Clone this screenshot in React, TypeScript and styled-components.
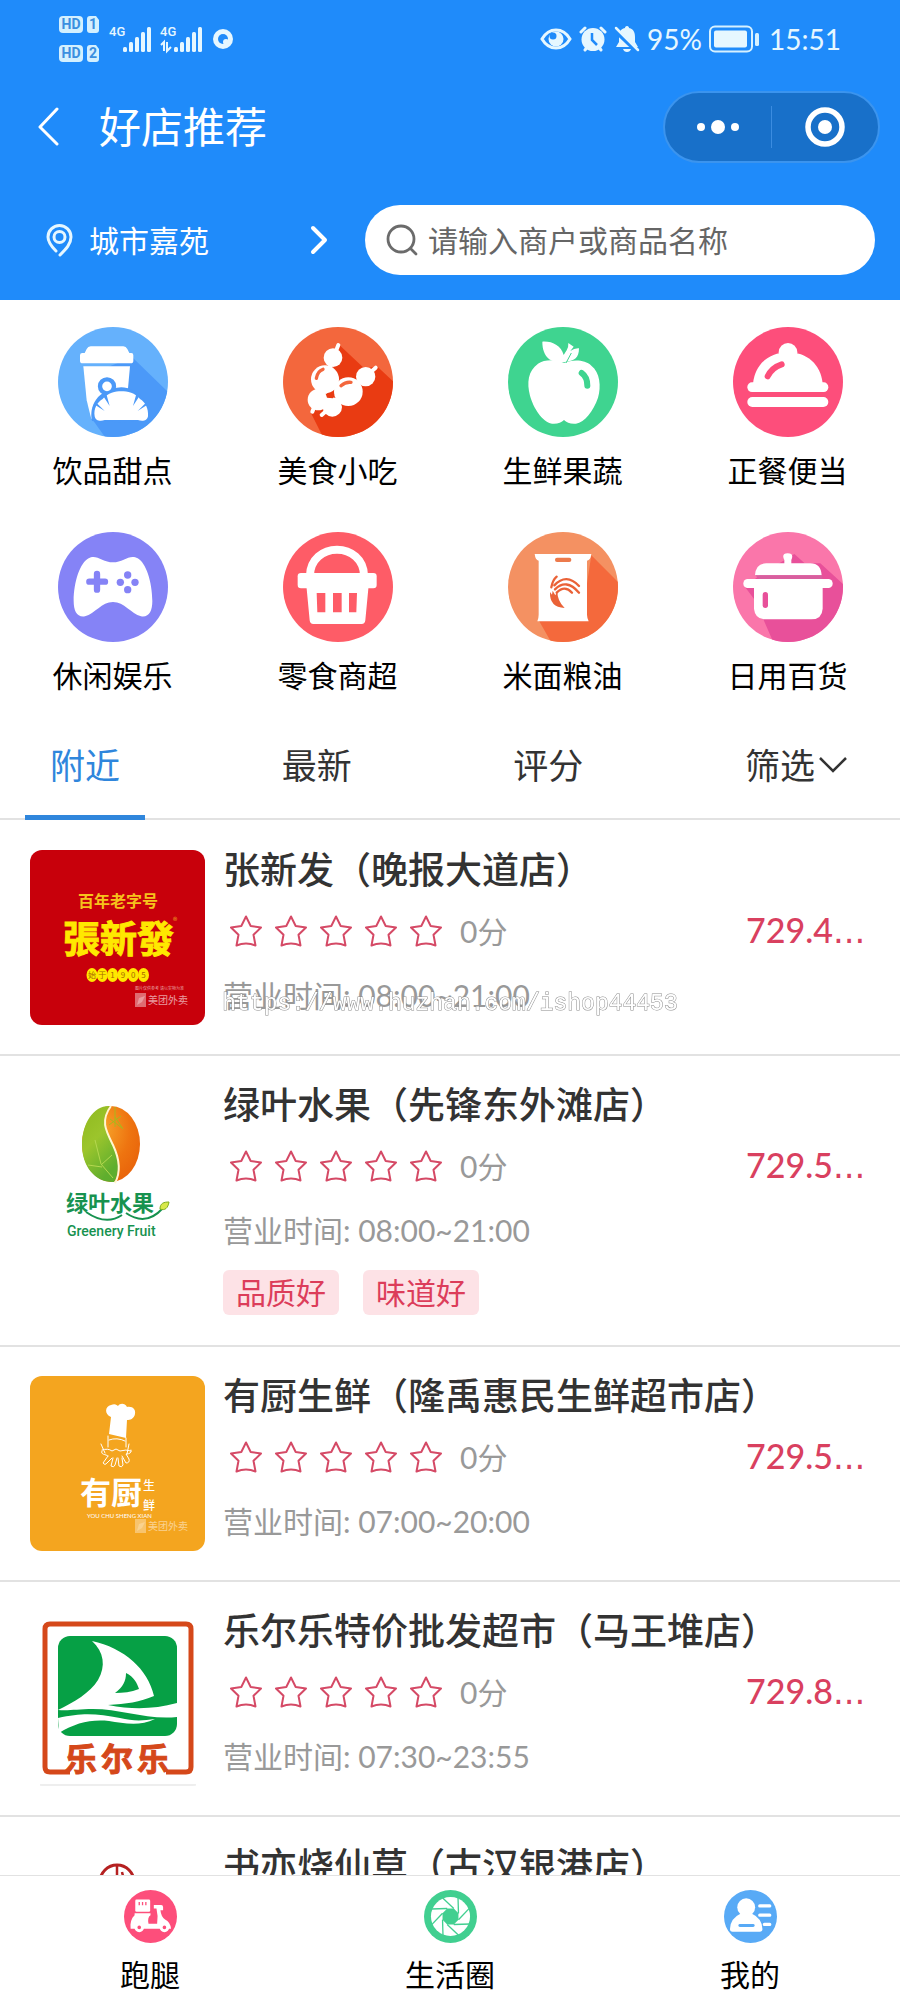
import { ReactNode, useState } from "react";
import styled, { createGlobalStyle } from "styled-components";

const cjk = `Lato, "Noto Sans CJK SC", sans-serif`;

const GlobalStyle = createGlobalStyle`
  * {
    box-sizing: border-box;
  }

  body {
    margin: 0;
    background: #fff;
    font-family: ${cjk};
    color: #333;
  }

  button, input {
    margin: 0;
    padding: 0;
    border: 0;
    background: none;
    color: inherit;
    font-family: inherit;
  }

  h1, h2, p {
    margin: 0;
    font-weight: 400;
  }

  a {
    color: inherit;
    text-decoration: none;
  }

  svg {
    display: block;
    flex-shrink: 0;
  }
`;

const Screen = styled.div`
  display: flex;
  flex-direction: column;
  height: 100vh;
`;

const Header = styled.header`
  flex-shrink: 0;
  padding-bottom: 25px;
  background: #1f8bfa;
  color: #fff;
`;

const StatusBar = styled.div`
  display: flex;
  justify-content: space-between;
  align-items: center;
  height: 78px;
  padding: 0 59px;
  color: #e6f7ff;
  font-size: 28px;
  line-height: 36px;
`;

const StatusGroup = styled.div`
  display: flex;
  align-items: center;
  gap: 7px;
`;

const Clock = styled.span`
  margin-left: 3px;
`;

const TitleBar = styled.div`
  display: flex;
  align-items: center;
  margin-top: 13px;
  padding: 0 20px 0 36px;
`;

const Back = styled.button`
  width: 63px;
`;

const Title = styled.h1`
  flex: 1;
  font-size: 42px;
  line-height: 52px;
`;

const Capsule = styled.div`
  display: flex;
  align-items: center;
  width: 217px;
  height: 72px;
  border: 2px solid #3b94ee;
  border-radius: 36px;
  background: #1870c9;
`;

const CapsuleButton = styled.button`
  display: flex;
  flex: 1;
  align-items: center;
  justify-content: center;
  height: 100%;
`;

const CapsuleDivider = styled.span`
  width: 1px;
  height: 42px;
  background: #3b8ce0;
`;

const SearchRow = styled.div`
  display: flex;
  margin-top: 42px;
  padding: 0 25px 0 45px;
`;

const Place = styled.button`
  display: flex;
  align-items: center;
  width: 320px;
  padding-right: 36px;
  font-size: 30px;
  line-height: 40px;
`;

const PlaceName = styled.span`
  flex: 1;
  padding-left: 15px;
  text-align: left;
`;

const SearchBox = styled.label`
  display: flex;
  flex: 1;
  align-items: center;
  gap: 10px;
  height: 70px;
  padding: 0 21px;
  border-radius: 35px;
  background: #fff;
`;

const SearchInput = styled.input`
  flex: 1;
  min-width: 0;
  height: 44px;
  font-size: 30px;
  color: #333;
  outline: none;

  &::placeholder {
    color: #666;
    opacity: 1;
  }
`;

const Content = styled.main`
  flex: 1;
  min-height: 0;
  overflow-y: auto;
  scrollbar-width: none;
`;

const Categories = styled.nav`
  display: grid;
  grid-template-columns: repeat(4, 1fr);
  row-gap: 42px;
  padding: 27px 0 12px;
`;

const Category = styled.a`
  display: flex;
  flex-direction: column;
  align-items: center;
  gap: 13px;
  color: #000;
  font-size: 30px;
  line-height: 40px;
`;

const Tabs = styled.div`
  display: flex;
  justify-content: space-between;
  margin-bottom: 1px;
  padding: 0 28px 0 25px;
  border-bottom: 2px solid #e2e2e2;
`;

const Tab = styled.button<{ $active: boolean }>`
  display: flex;
  align-items: center;
  gap: 4px;
  height: 113px;
  margin-bottom: -2px;
  padding: 8px 25px 0;
  border-bottom: 5px solid ${(p) => (p.$active ? "#2f86dc" : "transparent")};
  color: ${(p) => (p.$active ? "#2f86dc" : "#333")};
  font-size: 35px;
  line-height: 44px;
`;

const ShopRow = styled.article`
  display: flex;
  gap: 18px;
  padding: 29px 30px;
  border-bottom: 2px solid #e2e2e2;
`;

const Thumb = styled.div`
  width: 175px;
  height: 175px;
  flex-shrink: 0;
  border-radius: 12px;
  overflow: hidden;
`;

const ShopInfo = styled.div`
  flex: 1;
  min-width: 0;
`;

const ShopName = styled.h2`
  font-size: 37px;
  font-weight: 500;
  line-height: 40px;
  white-space: nowrap;
`;

const RatingLine = styled.div`
  display: flex;
  align-items: center;
  margin-top: 18px;
  padding-left: 7px;
  line-height: 44px;
`;

const Stars = styled.div`
  display: flex;
  gap: 13px;
`;

const Score = styled.span`
  flex: 1;
  padding-left: 18px;
  color: #999;
  font-size: 30px;
`;

const Distance = styled.span`
  width: 124px;
  color: #d9405f;
  font-size: 34px;
  font-weight: 500;
  white-space: nowrap;
`;

const Dots = styled.span`
  font-family: "DejaVu Sans", sans-serif;
`;

const Hours = styled.p`
  margin-top: 20px;
  color: #999;
  font-size: 30px;
  line-height: 44px;
`;

const Tags = styled.div`
  display: flex;
  gap: 24px;
  margin-top: 18px;
  margin-bottom: 1px;
`;

const Tag = styled.span`
  padding: 0 13px;
  border-radius: 6px;
  background: #fde2e6;
  color: #dc3d5a;
  font-size: 30px;
  line-height: 45px;
`;

const BottomNav = styled.nav`
  display: flex;
  flex-shrink: 0;
  height: 125px;
  border-top: 1px solid #e2e2e2;
  background: #fff;
`;

const NavItem = styled.a`
  display: flex;
  flex: 1;
  flex-direction: column;
  align-items: center;
  gap: 11px;
  padding-top: 14px;
  color: #000;
  font-size: 30px;
  line-height: 40px;
`;

const Watermark = styled.div`
  position: fixed;
  inset: 0;
  display: grid;
  place-items: center;
  padding-top: 8px;
  pointer-events: none;
  color: #fff;
  font-family: "Liberation Mono", monospace;
  font-size: 23px;
  paint-order: stroke fill;
  -webkit-text-stroke: 1px #8c8c8c;
`;

/* ---------- status bar ---------- */

const SignalBars = ({ x }: { x: number }) => (
  <g fill="#e6f7ff">
    {[5, 10, 15, 20, 25].map((h, i) => (
      <rect key={h} x={x + i * 6} y={36 - h} width="4" height={h} rx="1.5" />
    ))}
  </g>
);

const HdBadge = ({ y, sim }: { y: number; sim: string }) => (
  <g fontFamily="Roboto, sans-serif" fontWeight="700" fontSize="14" textAnchor="middle">
    <rect x="0" y={y} width="24" height="17" rx="4" fill="#d3f0ff" />
    <text x="12" y={y + 13} fill="#3b8fe0">HD</text>
    <path d={`M31 ${y}h6l3 4v10q0 3-3 3h-6q-3 0-3-3v-11q0-3 3-3z`} fill="#d3f0ff" />
    <text x="34" y={y + 13} fill="#3b8fe0">{sim}</text>
  </g>
);

const Signals = () => (
  <svg width="176" height="46" viewBox="0 0 176 46">
    <HdBadge y={0} sim="1" />
    <HdBadge y={29} sim="2" />
    <g fontFamily="Roboto, sans-serif" fontWeight="500" fontSize="13" fill="#e6f7ff">
      <text x="50" y="20">4G</text>
      <text x="101" y="20">4G</text>
    </g>
    <SignalBars x={64} />
    <SignalBars x={115} />
    <path d="M102 29l3-3v9M108 26v9l4-4" stroke="#e6f7ff" strokeWidth="2" fill="none" />
    <circle cx="164" cy="23" r="10" fill="#e6f7ff" />
    <circle cx="164" cy="23" r="5" fill="#1f8bfa" />
    <circle cx="167" cy="26" r="3" fill="#e6f7ff" />
  </svg>
);

const EyeIcon = () => (
  <svg width="32" height="26" viewBox="0 0 32 26">
    <path d="M2 13C9 1 23 1 30 13 23 25 9 25 2 13z" fill="none" stroke="#e6f7ff" strokeWidth="3" />
    <circle cx="16" cy="13" r="7.500" fill="#e6f7ff" />
    <circle cx="13" cy="10" r="3.500" fill="#1f8bfa" />
  </svg>
);

const AlarmIcon = () => (
  <svg width="28" height="26" viewBox="0 0 28 26">
    <g stroke="#e6f7ff" strokeWidth="3" strokeLinecap="round">
      <path d="M2 6l4-4M26 6l-4-4M6 24l3-4M22 24l-3-4" />
    </g>
    <circle cx="14" cy="13.500" r="11.500" fill="#e6f7ff" />
    <path d="M13 7v7l5 5" fill="none" stroke="#1f8bfa" strokeWidth="2.500" />
  </svg>
);

const BellOffIcon = () => (
  <svg width="26" height="28" viewBox="0 0 26 28">
    <path d="M13 1c1.500 0 2 1 2 2 5 1 6 5 6 9v5l3 5H2l3-5v-5c0-4 1-8 6-9 0-1 .5-2 2-2zM9 24h8q-1 3-4 3t-4-3z" fill="#e6f7ff" />
    <path d="M0 4l23 22" stroke="#1f8bfa" strokeWidth="5" />
    <path d="M2 3l22 22" stroke="#e6f7ff" strokeWidth="2.500" strokeLinecap="round" />
  </svg>
);

const BatteryIcon = () => (
  <svg width="50" height="28" viewBox="0 0 50 28">
    <rect x="1" y="1.500" width="42" height="25" rx="5" fill="none" stroke="#d6f1ff" strokeWidth="2" />
    <rect x="5" y="5.500" width="33" height="17" rx="2" fill="#e6f7ff" />
    <rect x="46" y="8" width="4" height="13" rx="1.500" fill="#d6f1ff" />
  </svg>
);

/* ---------- category icons ---------- */

interface IDisc {
  id: string;
  fill: string;
  shade?: string;
  shadow?: string;
  children: ReactNode;
}

const Disc = ({ id, fill, shade, shadow, children }: IDisc) => (
  <svg width="110" height="110" viewBox="0 0 330 330">
    <clipPath id={id}><circle cx="165" cy="165" r="165" /></clipPath>
    <g clipPath={`url(#${id})`}>
      <rect width="330" height="330" fill={fill} />
      {shadow && <path d={shadow} fill={shade} />}
      {children}
    </g>
  </svg>
);

const DrinkIcon = () => (
  <Disc id="drink" fill="#65b1fc" shade="#4b99f8" shadow="M222 90L340 205V340H148L98 270 150 120z">
    <path d="M98 58H196q8 0 12 8l6 12h6q6 0 6 7v16q0 8-8 8H74q-8 0-8-8V85q0-7 7-7h7l6-12q4-8 12-8z" fill="#fff" />
    <path d="M76 118H216L210 184 100 276 86 220z" fill="#fff" />
    <path d="M102 282C92 240 116 186 190 181c46 2 78 34 84 80l-60 26z" fill="#4b99f8" />
    <circle cx="147" cy="178" r="21" fill="#fff" stroke="#4b99f8" strokeWidth="13" />
    <path d="M110 268C106 244 118 226 134 216c16-18 38-23 56-23s42 5 56 23c16 10 26 28 24 52-2 14-18 16-30 11H140c-12 5-28 3-30-11z" fill="#fff" />
    <path d="M136 208l9-7 10 36zM244 208l-9-7-10 36zM112 234l4-6 24 24zM267 234l-4-6-24 24z" fill="#4b99f8" />
  </Disc>
);

const SkewerIcon = () => (
  <Disc id="skewer" fill="#f3673d" shade="#e93b12" shadow="M170 55L245 125 282 118 340 172V340H125L85 260z">
    <g stroke="#fff" strokeWidth="12" strokeLinecap="round">
      <path d="M166 54L88 254M278 122L116 264" />
    </g>
    <g fill="#fff">
      <circle cx="150" cy="92" r="28" />
      <circle cx="126" cy="157" r="42" />
      <circle cx="106" cy="218" r="32" />
      <circle cx="248" cy="149" r="29" />
      <circle cx="196" cy="194" r="43" />
      <circle cx="148" cy="240" r="29" />
    </g>
    <path d="M100 154q4-22 20-27M174 176q14-12 30-10" fill="none" stroke="#f3673d" strokeWidth="10" strokeLinecap="round" />
    <path d="M128 200l26 2-4 12-18-2z" fill="#e93b12" />
  </Disc>
);

const AppleIcon = () => (
  <Disc id="apple" fill="#3fd490">
    <path d="M168 108c22-10 62-12 82 8 26 20 30 62 20 96-14 40-40 74-66 78-16 2-28-4-36-11-8 7-20 13-36 11-30-6-56-48-66-84-10-40-6-74 24-96 18-12 52-14 78-2z" fill="#fff" />
    <path d="M103 44c30-2 56 12 64 40l9-14q6-10 5-22l16 11-10 13q12-9 26-8c0 28-14 38-38 40-30 8-72-2-72-60z" fill="#fff" />
    <path d="M190 78l-16 30" stroke="#3fd490" strokeWidth="3" />
    <path d="M221 138q17 12 17 38" fill="none" stroke="#3fd490" strokeWidth="18" strokeLinecap="round" />
  </Disc>
);

const ClocheIcon = () => (
  <Disc id="cloche" fill="#fd4e7b">
    <circle cx="165" cy="76" r="28" fill="#fff" />
    <path d="M60 170C66 110 110 76 165 76s98 34 104 94z" fill="#fff" />
    <rect x="43" y="166" width="243" height="29" rx="14" fill="#fff" />
    <rect x="43" y="210" width="243" height="30" rx="15" fill="#fff" />
    <path d="M104 148q12-26 42-36" fill="none" stroke="#fd4e7b" strokeWidth="18" strokeLinecap="round" />
  </Disc>
);

const GamepadIcon = () => (
  <Disc id="gamepad" fill="#8583f6">
    <path d="M92 79c22-14 42 12 73 12s50-26 74-12c24 12 44 70 44 128 0 30-10 50-34 46-30-8-50-43-84-43s-54 35-84 43c-24 4-34-16-34-46 0-58 20-116 45-128z" fill="#fff" />
    <path d="M117 126v47M94 149h47" stroke="#8583f6" strokeWidth="19" strokeLinecap="round" />
    <g fill="#8583f6">
      <circle cx="209" cy="129" r="11" />
      <circle cx="187" cy="151" r="11" />
      <circle cx="231" cy="151" r="11" />
      <circle cx="209" cy="173" r="11" />
    </g>
  </Disc>
);

const BasketIcon = () => (
  <Disc id="basket" fill="#fe5c67">
    <path d="M81 130C82 82 120 53 162 53s80 29 81 77" fill="none" stroke="#fff" strokeWidth="24" />
    <rect x="44" y="123" width="237" height="46" rx="10" fill="#fff" />
    <path d="M70 160H257L247 265q-1 11-11 11H91q-10 0-11-11z" fill="#fff" />
    <path d="M101 183h26v58h-24zM150 183h26v58h-26zM198 183h24l-2 58h-22z" fill="#fe5c67" />
  </Disc>
);

const RiceIcon = () => (
  <Disc id="rice" fill="#f49162" shade="#f4693c" shadow="M250 70L340 160V340H135L92 265 230 200z">
    <path d="M80 66H250q-2 18-13 20V248q0 8 5 20H88q4-10 4-20V86Q82 84 80 66z" fill="#fff" />
    <rect x="141" y="77" width="49" height="13" rx="6" fill="#ec7a4c" />
    <g fill="none" stroke="#ea6237" strokeWidth="7" strokeLinecap="round">
      <path d="M130 166q4-22 16-32M139 160q36-38 74 2M141 172q34-34 72 10M146 182q24-24 46 0" />
    </g>
    <path d="M126 180l6 8 2-12 8 14 6-12q0 30 22 50-46-2-44-48z" fill="#ea6237" />
  </Disc>
);

const PotIcon = () => (
  <Disc id="pot" fill="#fa76aa" shade="#e8509a" shadow="M184 66L215 94H262L340 165V340H125L88 255 66 205 36 165 80 130z">
    <path d="M66 130q2-36 34-36H154V84q-10-20 10-20t11 20V94H232q32 0 34 36z" fill="#fff" />
    <path d="M66 130h200l4 12H80z" fill="#d85f9f" />
    <rect x="31" y="141" width="268" height="27" rx="13" fill="#fff" />
    <path d="M63 160H269v70q-2 32-34 32H98q-32 0-35-32z" fill="#fff" />
    <rect x="89" y="180" width="16" height="48" rx="8" fill="#e8509a" />
  </Disc>
);

const categories = [
  { label: "饮品甜点", icon: <DrinkIcon /> },
  { label: "美食小吃", icon: <SkewerIcon /> },
  { label: "生鲜果蔬", icon: <AppleIcon /> },
  { label: "正餐便当", icon: <ClocheIcon /> },
  { label: "休闲娱乐", icon: <GamepadIcon /> },
  { label: "零食商超", icon: <BasketIcon /> },
  { label: "米面粮油", icon: <RiceIcon /> },
  { label: "日用百货", icon: <PotIcon /> },
];

/* ---------- shop logos ---------- */

const Logo = ({ children }: { children: ReactNode }) => (
  <svg width="175" height="175" viewBox="0 0 175 175" fontFamily={`"Noto Sans CJK SC", sans-serif`}>
    {children}
  </svg>
);

const MeituanMark = ({ opacity }: { opacity: number }) => (
  <g fill="#fff" opacity={opacity}>
    <rect x="105" y="143" width="11" height="14" opacity="0.7" />
    <path d="M107 155l2-7 6-2-3 6z" />
    <text x="118" y="154" fontSize="10">美团外卖</text>
  </g>
);

const ZhangLogo = () => (
  <Logo>
    <rect width="175" height="175" fill="#c8000b" />
    <text x="48" y="57" fontSize="16" fontWeight="700" fill="#f6c21c">百年老字号</text>
    <text x="33" y="103" fontSize="37" fontWeight="700" fill="#ffe800" stroke="#ffe800" strokeWidth="1">張新發</text>
    <text x="143" y="74" fontSize="9" fill="#f0a020">®</text>
    {["始", "于", "1", "9", "0", "5"].map((c, i) => (
      <g key={c}>
        <ellipse cx={62 + i * 10.3} cy="125" rx="5.500" ry="7" fill="#ffe800" />
        <text x={62 + i * 10.3} y="128" fontSize="8" textAnchor="middle" fill="#a86a00">{c}</text>
      </g>
    ))}
    <text x="105" y="140" fontSize="4" fill="#e8a0a0">图片仅供参考 请以实物为准</text>
    <MeituanMark opacity={0.6} />
  </Logo>
);

const GreeneryLogo = () => (
  <Logo>
    <defs>
      <linearGradient id="leaf" x1="0" y1="0" x2="0.500" y2="1">
        <stop offset="0" stopColor="#8fb91e" />
        <stop offset="0.500" stopColor="#9cc52c" />
        <stop offset="1" stopColor="#5fae2e" />
      </linearGradient>
      <radialGradient id="orange" cx="0.350" cy="0.300" r="0.800">
        <stop offset="0" stopColor="#f7a52a" />
        <stop offset="0.600" stopColor="#ee7410" />
        <stop offset="1" stopColor="#e8620a" />
      </radialGradient>
    </defs>
    <ellipse cx="81" cy="59" rx="29" ry="38" fill="url(#orange)" />
    <path d="M80 21C64 20 52 38 52 60s14 38 32 37c6-9 5-22-1-36-7-15-14-25-3-40z" fill="url(#leaf)" />
    <path d="M81 21C70 36 76 46 83 60c7 15 8 27 2 38" fill="none" stroke="#fff7d0" strokeWidth="2" />
    <path d="M85 22v20M80 34l12 9M91 31l-12 9M85 32l8 12" stroke="#a8b81c" strokeWidth="1" />
    <path d="M65 55l6 24 12 14M58 80l14 2M82 70L71 80" stroke="#b5d850" strokeWidth="1" fill="none" />
    <text x="36" y="126" fontSize="22" fontWeight="700" fill="#17924f">绿叶水果</text>
    <path d="M56 127q20 14 36 3M96 128q20 14 37-5" fill="none" stroke="#17924f" strokeWidth="2" />
    <path d="M130 124c0-6 4-7 9-7-1 6-4 9-9 7z" fill="#d8e84a" stroke="#7fae1e" />
    <text x="37" y="151" fontSize="14" fontWeight="500" fontFamily="Roboto, sans-serif" fill="#17924f">Greenery Fruit</text>
  </Logo>
);

const ChefLogo = () => (
  <Logo>
    <rect width="175" height="175" fill="#f4a51f" />
    <path d="M79 58l2-17c-7-3-6-11 0-12 4-2 6 0 7 1 2-3 7-3 9 1 6-1 9 3 8 7-1 5-5 6-8 6l-1 18z" fill="#fff" />
    <g fill="none" stroke="#fff" strokeLinecap="round">
      <path d="M78 60v11M96 62v9M79 64q8-3 16 1M71 68l4 9M99 68l-2 10M72 74q6-2 10 1l4-2 4 2q6-2 11 0" />
      <path d="M72 75c-2 4 4 3 6 5M78 80l-5 7q2 3 4 0l5-5M83 82l-2 8q3 2 4-1l2-7M88 82l1 8q3 2 4-1l-1-7M92 80l4 7q4 0 3-4l-3-5q6 0 5-4" />
    </g>
    <text x="50" y="128" fontSize="31" fontWeight="700" fill="#fff">有厨</text>
    <text x="113" y="114" fontSize="12" fontWeight="500" fill="#fff">生</text>
    <text x="113" y="134" fontSize="12" fontWeight="500" fill="#fff">鲜</text>
    <text x="57" y="142" fontSize="6" fontFamily="Lato, sans-serif" fill="#fff">YOU CHU SHENG XIAN</text>
    <MeituanMark opacity={0.5} />
  </Logo>
);

const LeerleLogo = () => (
  <Logo>
    <rect width="175" height="175" fill="#fff" />
    <path d="M40 161H20q-5 0-5-5V18q0-5 5-5H156q5 0 5 5V156q0 5-5 5H136" fill="none" stroke="#d5481a" strokeWidth="5" />
    <rect x="28" y="25" width="119" height="100" rx="12" fill="#06a045" />
    <path d="M62 30c32 7 56 28 62 55-14 6-28 8-46 9 26 5 46 4 69-2v14c-30 3-56-8-84-8-16 0-24 2-35 1 16-8 32-17 40-30 8-14 6-28-6-39z" fill="#fff" />
    <path d="M96 62c8 4 11 10 13 16-8 3-16 4-24 4 8-6 11-12 11-20z" fill="#06a045" />
    <path d="M28 107c26-6 40-4 62 0 12 3 22 3 35 1-16 8-32 4-46 2-18-2-34 2-50 12z" fill="#fff" />
    <text x="35" y="160" fontSize="32" fontWeight="700" fill="#d5481a" stroke="#d5481a">乐</text>
    <text x="71" y="160" fontSize="32" fontWeight="700" fill="#d5481a" stroke="#d5481a">尔</text>
    <text x="107" y="160" fontSize="32" fontWeight="700" fill="#d5481a" stroke="#d5481a">乐</text>
    <path d="M10 174H166" stroke="#ddd" />
  </Logo>
);

const ShuyiLogo = () => (
  <Logo>
    <circle cx="87" cy="36" r="17" fill="none" stroke="#b52121" strokeWidth="3" />
    <path d="M87 20v16M92 26l2 8" stroke="#b52121" strokeWidth="2.500" />
  </Logo>
);

interface IShop {
  name: string;
  logo: ReactNode;
  distance: string;
  hours: string;
  tags?: string[];
}

const shops: IShop[] = [
  { name: "张新发（晚报大道店）", logo: <ZhangLogo />, distance: "729.4", hours: "08:00~21:00" },
  { name: "绿叶水果（先锋东外滩店）", logo: <GreeneryLogo />, distance: "729.5", hours: "08:00~21:00", tags: ["品质好", "味道好"] },
  { name: "有厨生鲜（隆禹惠民生鲜超市店）", logo: <ChefLogo />, distance: "729.5", hours: "07:00~20:00" },
  { name: "乐尔乐特价批发超市（马王堆店）", logo: <LeerleLogo />, distance: "729.8", hours: "07:30~23:55" },
  { name: "书亦烧仙草（古汉银港店）", logo: <ShuyiLogo />, distance: "729.9", hours: "09:00~22:00" },
];

const Star = () => (
  <svg width="32" height="32" viewBox="0 0 32 32">
    <path d="M16 1.500l4.700 9.500 10.300 1.500-7.500 7.300 2 10.700Q16 26.500 6.500 30.500l2-10.700L1 12.500l10.300-1.500z" fill="none" stroke="#d54a66" strokeWidth="2" strokeLinejoin="round" />
  </svg>
);

const Shop = ({ name, logo, distance, hours, tags }: IShop) => (
  <ShopRow>
    <Thumb>{logo}</Thumb>
    <ShopInfo>
      <ShopName>{name}</ShopName>
      <RatingLine>
        <Stars>{[1, 2, 3, 4, 5].map((n) => <Star key={n} />)}</Stars>
        <Score>0分</Score>
        <Distance>{distance}<Dots>...</Dots></Distance>
      </RatingLine>
      <Hours>营业时间: {hours}</Hours>
      {tags && <Tags>{tags.map((t) => <Tag key={t}>{t}</Tag>)}</Tags>}
    </ShopInfo>
  </ShopRow>
);

/* ---------- bottom navigation ---------- */

const ScooterIcon = () => (
  <svg width="53" height="53" viewBox="0 0 160 160">
    <circle cx="80" cy="80" r="80" fill="#fd4e7b" />
    <rect x="34" y="29" width="45" height="37" rx="4" fill="#fff" />
    <path d="M46 36v10M56 36v10M66 36v10" stroke="#fd4e7b" strokeWidth="4" />
    <path d="M32 70H80v6q-10 6-6 26H100q4-22-2-46H90V45h22q6 0 6 6v10h-8q2 20 14 28 16 8 18 28H20c-2-18 2-32 12-41z" fill="#fff" />
    <g fill="#fd4e7b" stroke="#fff" strokeWidth="9">
      <circle cx="46" cy="113" r="10" />
      <circle cx="122" cy="113" r="10" />
    </g>
  </svg>
);

const ApertureIcon = () => (
  <svg width="53" height="53" viewBox="0 0 160 160">
    <circle cx="80" cy="80" r="80" fill="#41cf90" />
    <circle cx="80" cy="80" r="59" fill="#fff" />
    {[0, 45, 90, 135, 180, 225, 270, 315].map((a) => (
      <path key={a} d="M90 56L54 22" stroke="#41cf90" strokeWidth="4" transform={`rotate(${a} 80 80)`} />
    ))}
    <path d="M70 56h20l14 14v20l-14 14H70L56 90V70z" fill="#41cf90" />
  </svg>
);

const ProfileIcon = () => (
  <svg width="53" height="53" viewBox="0 0 160 160">
    <circle cx="80" cy="80" r="80" fill="#58aaf6" />
    <circle cx="67" cy="52" r="27" fill="#fff" />
    <path d="M52 70h30q34 16 34 48 0 8-8 8H26q-8 0-8-8 0-32 34-48z" fill="#fff" />
    <path d="M48 107h40" stroke="#58aaf6" strokeWidth="9" strokeLinecap="round" />
    <path d="M108 48h30M108 76h30M122 104h16" stroke="#fff" strokeWidth="10" strokeLinecap="round" />
  </svg>
);

const tabs = ["附近", "最新", "评分", "筛选"];

export default function App() {
  const [active, setActive] = useState("附近");

  return (
    <Screen>
      <GlobalStyle />
      <Header>
        <StatusBar>
          <Signals />
          <StatusGroup>
            <EyeIcon />
            <AlarmIcon />
            <BellOffIcon />
            <span>95%</span>
            <BatteryIcon />
            <Clock>15:51</Clock>
          </StatusGroup>
        </StatusBar>
        <TitleBar>
          <Back aria-label="返回">
            <svg width="24" height="40" viewBox="0 0 24 40">
              <path d="M21 2L4 20l17 17" fill="none" stroke="#fff" strokeWidth="3" strokeLinecap="round" strokeLinejoin="round" />
            </svg>
          </Back>
          <Title>好店推荐</Title>
          <Capsule>
            <CapsuleButton aria-label="更多">
              <svg width="42" height="14" viewBox="0 0 42 14" fill="#fff">
                <circle cx="4" cy="7" r="4" />
                <circle cx="21" cy="7" r="7" />
                <circle cx="38" cy="7" r="4" />
              </svg>
            </CapsuleButton>
            <CapsuleDivider />
            <CapsuleButton aria-label="关闭">
              <svg width="40" height="40" viewBox="0 0 40 40">
                <circle cx="20" cy="20" r="17" fill="none" stroke="#fff" strokeWidth="5.500" />
                <circle cx="20" cy="20" r="7" fill="#fff" />
              </svg>
            </CapsuleButton>
          </Capsule>
        </TitleBar>
        <SearchRow>
          <Place>
            <svg width="29" height="34" viewBox="0 0 29 34" fill="none" stroke="#e6f7ff" strokeWidth="3" strokeLinecap="round">
              <path d="M11 28C6 23 3 19 3 14a11.500 11.500 0 0 1 23 0c0 7-5 12-11 18" />
              <circle cx="14.500" cy="14" r="5.500" />
            </svg>
            <PlaceName>城市嘉苑</PlaceName>
            <svg width="20" height="30" viewBox="0 0 20 30">
              <path d="M4 3l12 12L4 27" fill="none" stroke="#fff" strokeWidth="4" strokeLinecap="round" strokeLinejoin="round" />
            </svg>
          </Place>
          <SearchBox>
            <svg width="32" height="32" viewBox="0 0 32 32" fill="none" stroke="#6b6b6b" strokeWidth="2.800" strokeLinecap="round">
              <circle cx="15" cy="15" r="13" />
              <path d="M25 25l5 5" />
            </svg>
            <SearchInput type="search" aria-label="搜索" placeholder="请输入商户或商品名称" />
          </SearchBox>
        </SearchRow>
      </Header>

      <Content>
        <Categories>
          {categories.map((c) => (
            <Category key={c.label} href="#">
              {c.icon}
              {c.label}
            </Category>
          ))}
        </Categories>
        <Tabs>
          {tabs.map((t) => (
            <Tab key={t} $active={t === active} onClick={() => setActive(t)}>
              {t}
              {t === "筛选" && (
                <svg width="28" height="20" viewBox="0 0 28 20">
                  <path d="M1 3l13 13L27 3" fill="none" stroke="#333" strokeWidth="2.500" />
                </svg>
              )}
            </Tab>
          ))}
        </Tabs>
        {shops.map((s) => <Shop key={s.name} {...s} />)}
      </Content>

      <BottomNav>
        <NavItem href="#"><ScooterIcon />跑腿</NavItem>
        <NavItem href="#"><ApertureIcon />生活圈</NavItem>
        <NavItem href="#"><ProfileIcon />我的</NavItem>
      </BottomNav>
      <Watermark>https://www.huzhan.com/ishop44453</Watermark>
    </Screen>
  );
}
